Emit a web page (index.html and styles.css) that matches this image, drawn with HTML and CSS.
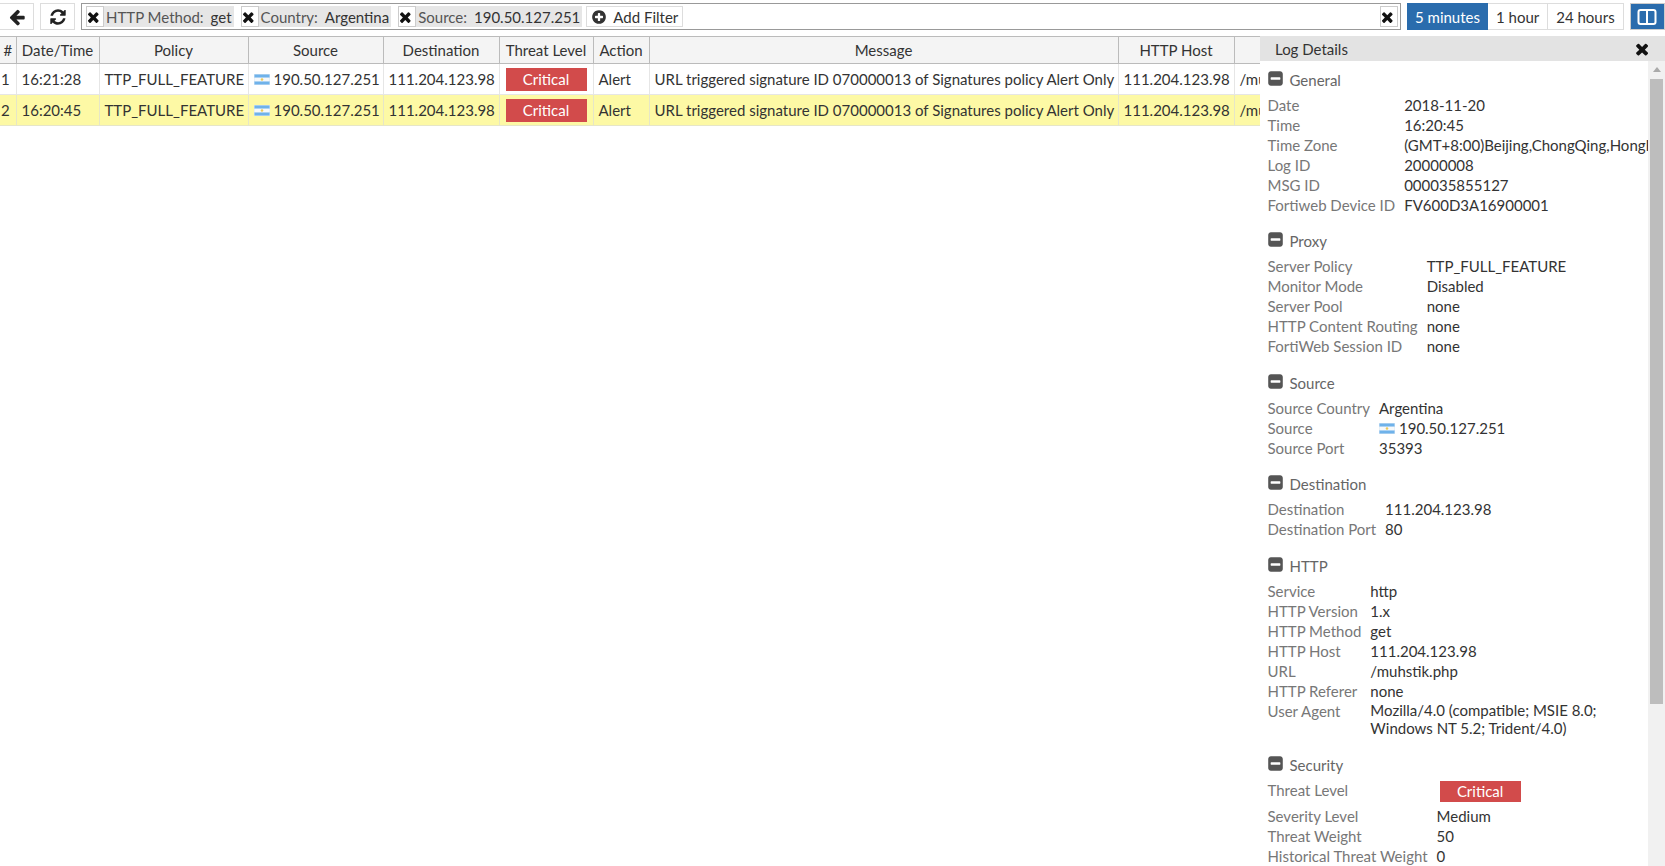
FILE: index.html
```html
<!DOCTYPE html>
<html lang="en">
<head>
    <meta charset="UTF-8">
    <title>Log Viewer</title>
    <link rel="stylesheet" href="styles.css">
</head>
<body>
    <svg class="sprites" xmlns="http://www.w3.org/2000/svg">
        <symbol id="i-times" viewBox="0 0 1792 1792"><path d="M1298 1322q0 40-28 68l-136 136q-28 28-68 28t-68-28l-294-294-294 294q-28 28-68 28t-68-28l-136-136q-28-28-28-68t28-68l294-294-294-294q-28-28-28-68t28-68l136-136q28-28 68-28t68 28l294 294 294-294q28-28 68-28t68 28l136 136q28 28 28 68t-28 68l-294 294 294 294q28 28 28 68z"/></symbol>
        <symbol id="i-back" viewBox="0 0 1792 1792"><path d="M1664 896v128q0 53-32.5 90.5t-84.5 37.5h-704l293 294q38 36 38 90t-38 90l-75 76q-37 37-90 37-52 0-91-37l-651-652q-37-37-37-90 0-52 37-91l651-650q38-38 91-38 52 0 90 38l75 74q38 38 38 91t-38 91l-293 293h704q52 0 84.5 37.5t32.5 90.5z"/></symbol>
        <symbol id="i-refresh" viewBox="0 0 1792 1792"><path d="M1639 1056q0 5-1 7-64 268-268 434.5t-478 166.5q-146 0-282.5-55t-243.5-157l-129 129q-19 19-45 19t-45-19-19-45v-448q0-26 19-45t45-19h448q26 0 45 19t19 45-19 45l-137 137q71 66 161 102t187 36q134 0 250-65t186-179q11-17 53-117 8-23 30-23h192q13 0 22.5 9.5t9.5 22.5zm25-800v448q0 26-19 45t-45 19h-448q-26 0-45-19t-19-45 19-45l138-138q-148-137-349-137-134 0-250 65t-186 179q-11 17-53 117-8 23-30 23h-199q-13 0-22.5-9.5t-9.5-22.5v-7q65-268 270-434.5t480-166.5q146 0 284 55.5t245 156.5l130-129q19-19 45-19t45 19 19 45z"/></symbol>
        <symbol id="i-plus" viewBox="0 0 1792 1792"><path d="M1344 960v-128q0-26-19-45t-45-19h-256v-256q0-26-19-45t-45-19h-128q-26 0-45 19t-19 45v256h-256q-26 0-45 19t-19 45v128q0 26 19 45t45 19h256v256q0 26 19 45t45 19h128q26 0 45-19t19-45v-256h256q26 0 45-19t19-45zm320-64q0 209-103 385.5t-279.5 279.5-385.5 103-385.5-103-279.5-279.5-103-385.5 103-385.5 279.5-279.5 385.5-103 385.5 103 279.5 279.5 103 385.5z"/></symbol>
        <symbol id="i-minus" viewBox="0 0 1792 1792"><path d="M1408 960v-128q0-26-19-45t-45-19h-896q-26 0-45 19t-19 45v128q0 26 19 45t45 19h896q26 0 45-19t19-45zm256-544v960q0 119-84.5 203.5t-203.5 84.5h-960q-119 0-203.5-84.5t-84.5-203.5v-960q0-119 84.5-203.5t203.5-84.5h960q119 0 203.5 84.5t84.5 203.5z"/></symbol>
        <symbol id="i-flag" viewBox="0 0 16 11"><rect width="16" height="11" fill="#d6e6f4"/><rect x="0.5" y="0.5" width="15" height="3.2" fill="#6fb2ea"/><rect x="0.5" y="7.3" width="15" height="3.2" fill="#6fb2ea"/><rect x="0.5" y="3.7" width="15" height="3.6" fill="#f6f9fb"/><circle cx="8" cy="5.5" r="1.3" fill="#ecc95a"/></symbol>
    </svg>

    <div class="toolbar">
        <button class="tool-btn back-btn"><svg class="icon icon-lg"><use href="#i-back"/></svg></button>
        <button class="tool-btn refresh-btn"><svg class="icon icon-lg"><use href="#i-refresh"/></svg></button>
        <div class="filter-bar">
            <span class="chip"><span class="chip-x"><svg class="icon"><use href="#i-times"/></svg></span><span class="chip-key">HTTP Method:</span> get</span>
            <span class="chip"><span class="chip-x"><svg class="icon"><use href="#i-times"/></svg></span><span class="chip-key">Country:</span> Argentina</span>
            <span class="chip"><span class="chip-x"><svg class="icon"><use href="#i-times"/></svg></span><span class="chip-key">Source:</span> 190.50.127.251</span>
            <span class="add-filter"><svg class="icon"><use href="#i-plus"/></svg>Add Filter</span>
            <span class="chip-x clear-all"><svg class="icon"><use href="#i-times"/></svg></span>
        </div>
        <div class="range">
            <span class="range-item active">5 minutes</span>
            <span class="range-item">1 hour</span>
            <span class="range-item">24 hours</span>
        </div>
        <button class="layout-btn">
            <svg width="20" height="18" viewBox="0 0 20 18"><rect x="1.5" y="2" width="17" height="14" rx="2" fill="none" stroke="#fff" stroke-width="2"/><rect x="9" y="2" width="2" height="14" fill="#fff"/></svg>
        </button>
    </div>

    <div class="main">
        <div class="log-area">
            <table class="log-table">
                <colgroup>
                    <col class="c-num"><col class="c-time"><col class="c-policy"><col class="c-source"><col class="c-dest"><col class="c-threat"><col class="c-action"><col class="c-msg"><col class="c-host"><col class="c-url">
                </colgroup>
                <thead>
                    <tr>
                        <th>#</th><th>Date/Time</th><th>Policy</th><th>Source</th><th>Destination</th><th>Threat Level</th><th>Action</th><th>Message</th><th>HTTP Host</th><th></th>
                    </tr>
                </thead>
                <tbody>
                    <tr>
                        <td>1</td><td>16:21:28</td><td>TTP_FULL_FEATURE</td>
                        <td><svg class="flag"><use href="#i-flag"/></svg>190.50.127.251</td>
                        <td>111.204.123.98</td><td><span class="badge">Critical</span></td><td>Alert</td>
                        <td>URL triggered signature ID 070000013 of Signatures policy Alert Only</td>
                        <td>111.204.123.98</td><td>/muhstik.php</td>
                    </tr>
                    <tr class="selected">
                        <td>2</td><td>16:20:45</td><td>TTP_FULL_FEATURE</td>
                        <td><svg class="flag"><use href="#i-flag"/></svg>190.50.127.251</td>
                        <td>111.204.123.98</td><td><span class="badge">Critical</span></td><td>Alert</td>
                        <td>URL triggered signature ID 070000013 of Signatures policy Alert Only</td>
                        <td>111.204.123.98</td><td>/muhstik.php</td>
                    </tr>
                </tbody>
            </table>
        </div>

        <aside class="details">
            <div class="details-head">
                <span>Log Details</span>
                <svg class="icon close-icon"><use href="#i-times"/></svg>
            </div>
            <div class="details-body">
                <section class="group">
                    <h4><svg class="icon"><use href="#i-minus"/></svg>General</h4>
                    <div class="fields">
                        <span>Date</span><span>2018-11-20</span>
                        <span>Time</span><span>16:20:45</span>
                        <span>Time Zone</span><span class="clip">(GMT+8:00)Beijing,ChongQing,HongKong,Urumqi</span>
                        <span>Log ID</span><span>20000008</span>
                        <span>MSG ID</span><span>000035855127</span>
                        <span>Fortiweb Device ID</span><span>FV600D3A16900001</span>
                    </div>
                </section>
                <section class="group group-tall">
                    <h4><svg class="icon"><use href="#i-minus"/></svg>Proxy</h4>
                    <div class="fields">
                        <span>Server Policy</span><span>TTP_FULL_FEATURE</span>
                        <span>Monitor Mode</span><span>Disabled</span>
                        <span>Server Pool</span><span>none</span>
                        <span>HTTP Content Routing</span><span>none</span>
                        <span>FortiWeb Session ID</span><span>none</span>
                    </div>
                </section>
                <section class="group">
                    <h4><svg class="icon"><use href="#i-minus"/></svg>Source</h4>
                    <div class="fields">
                        <span>Source Country</span><span>Argentina</span>
                        <span>Source</span><span><svg class="flag"><use href="#i-flag"/></svg>190.50.127.251</span>
                        <span>Source Port</span><span>35393</span>
                    </div>
                </section>
                <section class="group group-tall">
                    <h4><svg class="icon"><use href="#i-minus"/></svg>Destination</h4>
                    <div class="fields">
                        <span>Destination</span><span>111.204.123.98</span>
                        <span>Destination Port</span><span>80</span>
                    </div>
                </section>
                <section class="group">
                    <h4><svg class="icon"><use href="#i-minus"/></svg>HTTP</h4>
                    <div class="fields">
                        <span>Service</span><span>http</span>
                        <span>HTTP Version</span><span>1.x</span>
                        <span>HTTP Method</span><span>get</span>
                        <span>HTTP Host</span><span>111.204.123.98</span>
                        <span>URL</span><span>/muhstik.php</span>
                        <span>HTTP Referer</span><span>none</span>
                        <span>User Agent</span><span class="wrap">Mozilla/4.0 (compatible; MSIE 8.0; Windows NT 5.2; Trident/4.0)</span>
                    </div>
                </section>
                <section class="group">
                    <h4><svg class="icon"><use href="#i-minus"/></svg>Security</h4>
                    <div class="fields">
                        <span>Threat Level</span><span class="badge-cell"><span class="badge">Critical</span></span>
                        <span>Severity Level</span><span>Medium</span>
                        <span>Threat Weight</span><span>50</span>
                        <span>Historical Threat Weight</span><span>0</span>
                    </div>
                </section>
            </div>
            <div class="scrollbar"><div class="scroll-up"></div><div class="scroll-thumb"></div></div>
        </aside>
    </div>
</body>
</html>
```
FILE: styles.css
```css
* {
    box-sizing: border-box;
}

html, body {
    height: 100%;
}

body {
    margin: 0;
    display: flex;
    flex-direction: column;
    overflow: hidden;
    font-family: Lato, "Open Sans", sans-serif;
    font-size: 15px;
    color: #333;
    background-color: #fff;
}

.sprites {
    position: absolute;
    width: 0;
    height: 0;
}

.icon {
    width: 16px;
    height: 16px;
    fill: currentColor;
    flex: none;
}

.icon-lg {
    width: 18px;
    height: 18px;
}

.toolbar {
    display: flex;
    align-items: flex-start;
    height: 36px;
    padding: 3px 3px 0 0;
    flex: none;
    white-space: nowrap;
}

.tool-btn {
    display: flex;
    align-items: center;
    justify-content: center;
    height: 27px;
    flex: none;
    padding: 0;
    border: 1px solid #ddd;
    background: #fff;
    color: #222;
}

.back-btn {
    width: 34px;
    border-left: none;
}

.refresh-btn {
    width: 35px;
    margin-left: 6px;
}

.filter-bar {
    display: flex;
    align-items: center;
    gap: 7px;
    width: 1320px;
    height: 27px;
    flex: none;
    margin-left: 6px;
    padding: 0 2px 0 4px;
    border: 1px solid #999;
}

.chip {
    display: flex;
    align-items: center;
    height: 21px;
    padding-right: 2px;
    background-color: #e6e6e6;
    color: #333;
}

.chip-key {
    margin-right: 7px;
    color: #555;
}

.chip-x {
    display: flex;
    align-items: center;
    justify-content: center;
    width: 18px;
    height: 21px;
    margin-right: 2px;
    border: 1px solid #ccc;
    background: #fff;
    color: #111;
}

.add-filter {
    display: flex;
    align-items: center;
    gap: 6px;
    height: 21px;
    margin-left: -3px;
    padding: 0 4px;
    border: 1px solid #ddd;
}

.clear-all {
    margin-left: auto;
    margin-right: 0;
}

.range {
    display: flex;
    height: 27px;
    flex: none;
    margin-left: 6px;
    border: 1px solid #ddd;
    border-left: none;
}

.range-item {
    display: flex;
    align-items: center;
    justify-content: center;
    padding: 0 8px;
    border-right: 1px solid #ddd;
}

.range-item:last-child {
    border-right: none;
}

.range-item.active {
    width: 81px;
    margin-top: -1px;
    margin-bottom: -1px;
    border-right: none;
    background-color: #2a6cad;
    color: #fff;
}

.layout-btn {
    display: flex;
    align-items: center;
    justify-content: center;
    width: 35px;
    height: 27px;
    flex: none;
    margin-left: 6px;
    padding: 0;
    border: 1px solid #ccc;
    background-color: #2a6cad;
}

.main {
    display: flex;
    flex: 1;
    min-height: 0;
}

.log-area {
    flex: 1;
    min-width: 0;
    overflow: hidden;
}

.log-table {
    table-layout: fixed;
    width: 1360px;
    border-collapse: collapse;
    white-space: nowrap;
}

.c-num { width: 16px; }
.c-time { width: 83px; }
.c-policy { width: 149px; }
.c-source { width: 135px; }
.c-dest { width: 116px; }
.c-threat { width: 94px; }
.c-action { width: 56px; }
.c-msg { width: 469px; }
.c-host { width: 116px; }
.c-url { width: 126px; }

.log-table th {
    height: 27px;
    padding: 0 5px;
    border: 1px solid #bbb;
    background-color: #f4f4f4;
    font-weight: 400;
    text-align: center;
    overflow: hidden;
}

.log-table td {
    height: 31px;
    padding: 0 5px;
    border: 1px solid #e6e6e6;
    overflow: hidden;
}

.log-table th:first-child,
.log-table td:first-child {
    padding: 0 1px;
    border-left: none;
}

.log-table .selected td {
    background-color: #fdf9a5;
    border-color: #e6e6c8;
}

.badge {
    display: block;
    width: 81px;
    height: 23px;
    margin: 0 auto;
    background-color: #d24b4b;
    color: #fff;
    line-height: 23px;
    text-align: center;
}

.flag {
    width: 16px;
    height: 11px;
    margin-right: 4px;
}

.details {
    position: relative;
    display: flex;
    flex-direction: column;
    width: 405px;
    flex: none;
    background-color: #fff;
}

.details-head {
    display: flex;
    align-items: center;
    justify-content: space-between;
    height: 25px;
    flex: none;
    padding: 0 12px 0 15px;
    background-color: #e3e3e3;
}

.close-icon {
    width: 18px;
    height: 18px;
    color: #111;
}

.details-body {
    flex: 1;
    min-height: 0;
    width: 388px;
    padding: 6px 0 0 7.5px;
    overflow: hidden;
}

.group {
    margin-bottom: 13px;
}

.group-tall {
    margin-bottom: 14px;
}

.group h4 {
    display: flex;
    align-items: center;
    gap: 6px;
    height: 25px;
    margin: 0 0 3px;
    color: #666;
    font-size: 15px;
    font-weight: 400;
}

.group h4 .icon {
    width: 17px;
    height: 17px;
    margin-top: -3px;
    margin-left: -1px;
    color: #555;
}

.fields {
    display: grid;
    grid-template-columns: max-content minmax(0, 1fr);
    column-gap: 9px;
    line-height: 20px;
}

.fields > span:nth-child(odd) {
    color: #777;
}

.clip {
    overflow: hidden;
    white-space: nowrap;
}

.wrap {
    padding-bottom: 2px;
    line-height: 18px;
}

.badge-cell {
    padding: 1px 0 4px;
}

.badge-cell .badge {
    margin: 0 0 0 3px;
    height: 21px;
    line-height: 21px;
}

.scrollbar {
    position: absolute;
    top: 25px;
    right: 0;
    bottom: 0;
    width: 17px;
    background-color: #f1f1f1;
}

.scroll-up {
    width: 0;
    height: 0;
    margin: 6px auto 0;
    border: 4px solid transparent;
    border-top: none;
    border-bottom: 5px solid #aaa;
}

.scroll-thumb {
    width: 13px;
    height: 625px;
    margin: 7px auto 0;
    background-color: #bdbdbd;
}
```
